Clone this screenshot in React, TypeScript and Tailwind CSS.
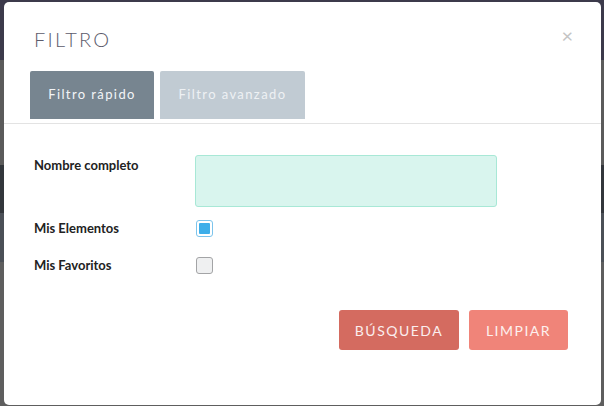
import React from 'react';

export default function App() {
  return (
    <div className="relative h-[406px] w-[604px] overflow-hidden font-['Lato','Liberation_Sans',sans-serif]">
      {/* page behind the overlay */}
      <div className="flex h-full flex-col">
        <div className="h-[60px] bg-[#3c3a4b]" />
        <div className="h-[105px] bg-[#5b5b5b]" />
        <div className="h-[48px] bg-[#32363b]" />
        <div className="h-[49px] bg-[#4b5057]" />
        <div className="flex-1 bg-[#5e5e5e]" />
      </div>

      {/* modal */}
      <div className="absolute left-[4px] top-[2px] right-[3px] bottom-[1px] flex flex-col rounded-[5px] bg-white">
        <div className="relative px-[30px] pt-[25px]">
          <h2 className="text-[20px] font-light leading-[24px] tracking-[2.2px] text-[#5c5b6b]">FILTRO</h2>
          <button className="absolute right-[28px] top-[23px] text-[20px] leading-[20px] text-[#c4c4c4]">×</button>
        </div>

        <div className="mt-[20px] flex gap-[6px] px-[26px]">
          <div className="flex h-[48px] w-[124px] items-center justify-center rounded-t-[2px] bg-[#778590] text-[13px] tracking-[1.4px] text-[#f3f5f7]">
            Filtro rápido
          </div>
          <div className="flex h-[48px] w-[145px] items-center justify-center rounded-t-[2px] bg-[#c1cbd3] text-[13px] tracking-[1.4px] text-[#eef1f4]">
            Filtro avanzado
          </div>
        </div>
        <div className="mt-[4px] h-px bg-[#e3e3e3]" />

        <div className="flex flex-col px-[30px] pt-[31px]">
          <div className="flex">
            <label className="w-[161px] pt-[1px] text-[13px] font-bold leading-[18px] text-[#222]">Nombre completo</label>
            <div className="h-[52px] w-[302px] rounded-[3px] border border-[#a8e8d6] bg-[#d9f5ee]" />
          </div>
          <div className="mt-[12px] flex items-center">
            <label className="w-[162px] text-[13px] font-bold leading-[18px] text-[#222]">Mis Elementos</label>
            <span className="flex h-[17px] w-[17px] items-center justify-center rounded-[3px] border border-[#7cc4ec] bg-white p-[2px]">
              <span className="h-full w-full rounded-[1px] bg-[#3daee9]" />
            </span>
          </div>
          <div className="mt-[19px] flex items-center">
            <label className="w-[162px] text-[13px] font-bold leading-[18px] text-[#222]">Mis Favoritos</label>
            <span className="h-[17px] w-[17px] rounded-[3px] border border-[#a3a4a6] bg-[#eff0f1]" />
          </div>
        </div>

        <div className="mt-[36px] flex justify-end gap-[10px] pr-[33px]">
          <button className="h-[40px] w-[120px] rounded-[3px] bg-[#d46b60] text-[14px] tracking-[1.5px] text-[#fbeeee]">BÚSQUEDA</button>
          <button className="h-[40px] w-[99px] rounded-[3px] bg-[#f08479] text-[14px] tracking-[1.5px] text-[#fdf0ee]">LIMPIAR</button>
        </div>
      </div>
    </div>
  );
}
